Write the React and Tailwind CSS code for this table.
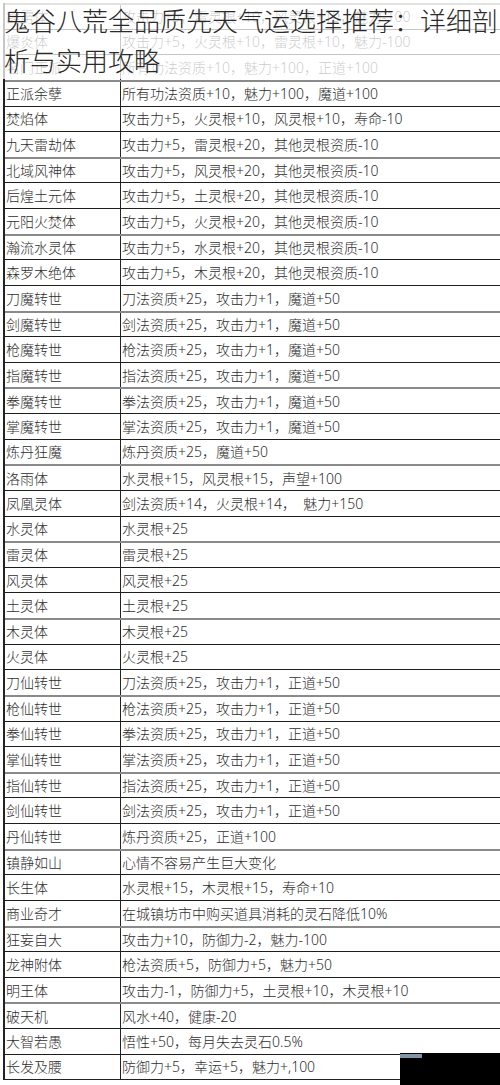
const ROWS = [
  ['霹雳体', '攻击力+5，雷灵根+10，风灵根+10，魅力-100'],
  ['爆炎体', '攻击力+5，火灵根+10，雷灵根+10，魅力-100'],
  ['名门正派', '所有功法资质+10，魅力+100，正道+100'],
  ['正派余孽', '所有功法资质+10，魅力+100，魔道+100'],
  ['焚焰体', '攻击力+5，火灵根+10，风灵根+10，寿命-10'],
  ['九天雷劫体', '攻击力+5，雷灵根+20，其他灵根资质-10'],
  ['北域风神体', '攻击力+5，风灵根+20，其他灵根资质-10'],
  ['后煌土元体', '攻击力+5，土灵根+20，其他灵根资质-10'],
  ['元阳火焚体', '攻击力+5，火灵根+20，其他灵根资质-10'],
  ['瀚流水灵体', '攻击力+5，水灵根+20，其他灵根资质-10'],
  ['森罗木绝体', '攻击力+5，木灵根+20，其他灵根资质-10'],
  ['刀魔转世', '刀法资质+25，攻击力+1，魔道+50'],
  ['剑魔转世', '剑法资质+25，攻击力+1，魔道+50'],
  ['枪魔转世', '枪法资质+25，攻击力+1，魔道+50'],
  ['指魔转世', '指法资质+25，攻击力+1，魔道+50'],
  ['拳魔转世', '拳法资质+25，攻击力+1，魔道+50'],
  ['掌魔转世', '掌法资质+25，攻击力+1，魔道+50'],
  ['炼丹狂魔', '炼丹资质+25，魔道+50'],
  ['洛雨体', '水灵根+15，风灵根+15，声望+100'],
  ['凤凰灵体', '剑法资质+14，火灵根+14，  魅力+150'],
  ['水灵体', '水灵根+25'],
  ['雷灵体', '雷灵根+25'],
  ['风灵体', '风灵根+25'],
  ['土灵体', '土灵根+25'],
  ['木灵体', '木灵根+25'],
  ['火灵体', '火灵根+25'],
  ['刀仙转世', '刀法资质+25，攻击力+1，正道+50'],
  ['枪仙转世', '枪法资质+25，攻击力+1，正道+50'],
  ['拳仙转世', '拳法资质+25，攻击力+1，正道+50'],
  ['掌仙转世', '掌法资质+25，攻击力+1，正道+50'],
  ['指仙转世', '指法资质+25，攻击力+1，正道+50'],
  ['剑仙转世', '剑法资质+25，攻击力+1，正道+50'],
  ['丹仙转世', '炼丹资质+25，正道+100'],
  ['镇静如山', '心情不容易产生巨大变化'],
  ['长生体', '水灵根+15，木灵根+15，寿命+10'],
  ['商业奇才', '在城镇坊市中购买道具消耗的灵石降低10%'],
  ['狂妄自大', '攻击力+10，防御力-2，魅力-100'],
  ['龙神附体', '枪法资质+5，防御力+5，魅力+50'],
  ['明王体', '攻击力-1，防御力+5，土灵根+10，木灵根+10'],
  ['破天机', '风水+40，健康-20'],
  ['大智若愚', '悟性+50，每月失去灵石0.5%'],
  ['长发及腰', '防御力+5，幸运+5，魅力+,100'],
]

const font = { fontFamily: '"Noto Sans", "Noto Sans CJK SC", sans-serif' }

function Row({ name, effect, index }) {
  // every third rule comes out lighter in the scaled source image
  const line = index % 3 === 0 ? 'border-t-2 border-[#8a8a8a]' : 'border-t border-[#1e1e1e]'
  return (
    <div className={`flex h-[25.63px] box-border ${line}`}>
      <div className="w-[115px] shrink-0 flex items-center pl-[1px] whitespace-nowrap">{name}</div>
      <div className="flex-1 flex items-center pl-[1px] border-l border-[#222] whitespace-pre">{effect}</div>
    </div>
  )
}

export default function App() {
  return (
    <div className="relative w-[500px] h-[1085px] overflow-hidden bg-white" style={font}>
      <div className="pt-[3px]">
        <div className="ml-[3px] w-[560px] border-l-2 border-[#222] text-[14px] font-light text-[#2e2e2e] border-b border-b-[#222]">
          {ROWS.map(([name, effect], i) => (
            <Row key={name} name={name} effect={effect} index={i - 3} />
          ))}
        </div>
      </div>

      {/* faded header band with the article title */}
      <div className="absolute top-0 left-0 w-[500px] h-[79px] bg-white/75">
        <h1 className="pl-1 pt-[1px] text-[26px] leading-[40px] font-light text-[#2a2a2a]">
          鬼谷八荒全品质先天气运选择推荐：详细剖析与实用攻略
        </h1>
      </div>

      {/* watermark block */}
      <div className="absolute left-[400px] top-[1053px] w-[100px] h-[32px] bg-black">
        <div className="mt-[1px] w-[22px] h-[4px] bg-[#7f93aa]" />
      </div>
    </div>
  )
}
